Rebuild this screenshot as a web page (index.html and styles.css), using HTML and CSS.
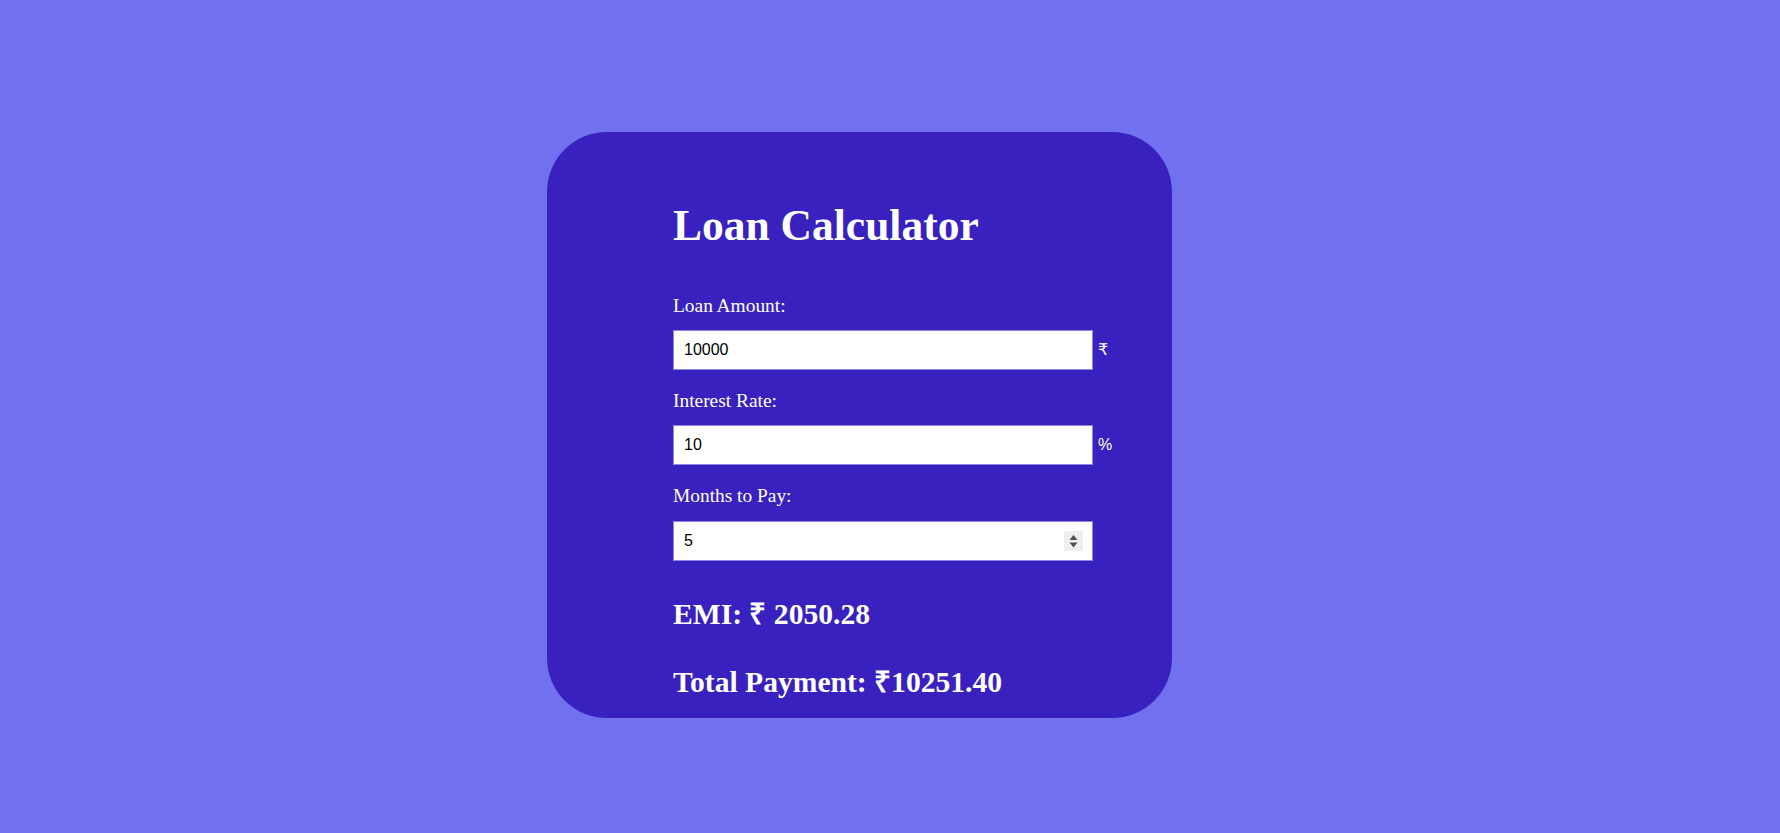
FILE: index.html
```html
<!DOCTYPE html>
<html lang="en">
<head>
<meta charset="utf-8">
<title>Loan Calculator</title>
<link rel="stylesheet" href="styles.css">
</head>
<body>
  <main class="card">
    <h1 class="title">Loan Calculator</h1>
    <div class="field">
      <label class="label" for="amount">Loan Amount:</label>
      <div class="row">
        <input class="input" id="amount" type="number" value="10000">
        <span class="unit">₹</span>
      </div>
    </div>
    <div class="field">
      <label class="label" for="rate">Interest Rate:</label>
      <div class="row">
        <input class="input" id="rate" type="number" value="10">
        <span class="unit">%</span>
      </div>
    </div>
    <div class="field">
      <label class="label" for="months">Months to Pay:</label>
      <div class="row">
        <span class="spin-wrap">
          <input class="input" id="months" type="number" value="5">
          <span class="spinner">
            <svg width="19" height="20" viewBox="0 0 19 20">
              <rect width="19" height="20" fill="#efefef"/>
              <path d="M5.5 9 L9.5 4 L13.5 9 Z" fill="#505050"/>
              <path d="M5.5 11.5 L9.5 16.5 L13.5 11.5 Z" fill="#505050"/>
            </svg>
          </span>
        </span>
      </div>
    </div>
    <h2 class="result emi">EMI: ₹ 2050.28</h2>
    <h2 class="result total">Total Payment: ₹10251.40</h2>
  </main>
</body>
</html>
```

FILE: styles.css
```css
html, body {
  margin: 0;
}

body {
  min-height: 100vh;
  box-sizing: border-box;
  padding: 16px 61px 0 0;
  background: #7170ee;
  display: flex;
  justify-content: center;
  align-items: center;
  overflow: hidden;
  font-family: "Liberation Serif", "Times New Roman", serif;
  color: #ffffff;
}

.card {
  width: 625px;
  box-sizing: border-box;
  background: #3821be;
  border-radius: 60px;
  padding: 68px 20px 19px 126px;
}

.title {
  margin: 0 0 45px 0;
  font-size: 43.5px;
  line-height: 50px;
  font-weight: bold;
}

.field {
  margin-bottom: 20px;
}

.field:last-of-type {
  margin-bottom: 0;
}

.label {
  display: block;
  font-size: 19.4px;
  line-height: 22px;
  margin-bottom: 13px;
}

.row {
  display: flex;
  align-items: baseline;
  gap: 5px;
}

.input {
  width: 420px;
  height: 40px;
  box-sizing: border-box;
  border: 1px solid #8a85e6;
  padding: 0 10px;
  margin: 0;
  background: #ffffff;
  color: #000000;
  font-family: "Liberation Sans", Arial, sans-serif;
  font-size: 16px;
  outline: none;
  -moz-appearance: textfield;
}

.input::-webkit-outer-spin-button,
.input::-webkit-inner-spin-button {
  -webkit-appearance: none;
  margin: 0;
}

.unit {
  font-family: "Liberation Sans", "DejaVu Sans", Arial, sans-serif;
  font-size: 16px;
  color: #ffffff;
}

.spin-wrap {
  position: relative;
  display: inline-block;
  margin-top: 1px;
}

.spin-wrap .input {
  display: block;
}

.spinner {
  position: absolute;
  right: 10px;
  top: 10px;
  width: 19px;
  height: 20px;
  display: block;
}

.spinner svg {
  display: block;
}

.result {
  margin: 0;
  font-size: 29.6px;
  line-height: 34px;
  font-weight: bold;
}

.emi {
  margin-top: 36px;
}

.total {
  margin-top: 34px;
}
```
